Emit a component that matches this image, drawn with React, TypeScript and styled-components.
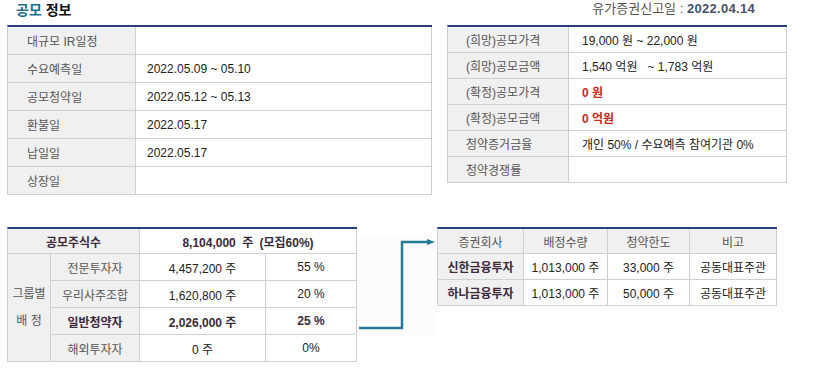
import styled, { createGlobalStyle } from "styled-components"

const GlobalStyle = createGlobalStyle`
    body {
        margin: 0;
        background: #fff;
        font-family: "Liberation Sans", "Noto Sans CJK KR", sans-serif;
        font-size: 12px;
        color: #333;
    }
`

const topLeft = [
    { label: "대규모 IR일정", value: "" },
    { label: "수요예측일", value: "2022.05.09 ~ 05.10" },
    { label: "공모청약일", value: "2022.05.12 ~ 05.13" },
    { label: "환불일", value: "2022.05.17" },
    { label: "납일일", value: "2022.05.17" },
    { label: "상장일", value: "" },
]

const topRight = [
    { label: "(희망)공모가격", value: "19,000 원 ~ 22,000 원" },
    { label: "(희망)공모금액", value: "1,540 억원 \u00a0 ~ 1,783 억원" },
    { label: "(확정)공모가격", value: "0 원", red: true },
    { label: "(확정)공모금액", value: "0 억원", red: true },
    { label: "청약증거금율", value: "개인 50% / 수요예측 참여기관 0%" },
    { label: "청약경쟁률", value: "" },
]

const groups = [
    { name: "전문투자자", qty: "4,457,200 주", pct: "55 %" },
    { name: "우리사주조합", qty: "1,620,800 주", pct: "20 %" },
    { name: "일반청약자", qty: "2,026,000 주", pct: "25 %", bold: true },
    { name: "해외투자자", qty: "0 주", pct: "0%" },
]

const brokers = [
    { name: "신한금융투자", qty: "1,013,000 주", limit: "33,000 주", note: "공동대표주관" },
    { name: "하나금융투자", qty: "1,013,000 주", limit: "50,000 주", note: "공동대표주관" },
]

export default function App() {
    return (
        <Page>
            <GlobalStyle />
            <TitleBar>
                <Title><em>공모</em> 정보</Title>
                <FilingDate>유가증권신고일 : <b>2022.04.14</b></FilingDate>
            </TitleBar>

            <TopRow>
                <InfoTable $width={425}>
                    <colgroup>
                        <col style={{ width: 128 }} />
                        <col />
                    </colgroup>
                    <tbody>
                        {topLeft.map((r) => (
                            <tr key={r.label}>
                                <Th $h={27} $pad={19}>{r.label}</Th>
                                <Td $h={27} $pad={11}>{r.value}</Td>
                            </tr>
                        ))}
                    </tbody>
                </InfoTable>

                <InfoTable $width={340}>
                    <colgroup>
                        <col style={{ width: 121 }} />
                        <col />
                    </colgroup>
                    <tbody>
                        {topRight.map((r) => (
                            <tr key={r.label}>
                                <Th $h={25} $pad={18}>{r.label}</Th>
                                <Td $h={25} $pad={13}>
                                    {r.red ? <Red>{r.value}</Red> : r.value}
                                </Td>
                            </tr>
                        ))}
                    </tbody>
                </InfoTable>
            </TopRow>

            <BottomRow>
                <InfoTable $width={350}>
                    <colgroup>
                        <col style={{ width: 43 }} />
                        <col style={{ width: 89 }} />
                        <col style={{ width: 126 }} />
                        <col />
                    </colgroup>
                    <tbody>
                        <tr>
                            <Th $h={24} $center $bold colSpan={2}>공모주식수</Th>
                            <Td $h={24} $center $bold $wide colSpan={2}>8,104,000 주 (모집60%)</Td>
                        </tr>
                        {groups.map((g, i) => (
                            <tr key={g.name}>
                                {i === 0 && (
                                    <Th $h={26} $center rowSpan={4}>
                                        <GroupLabel>그룹별<br />배 정</GroupLabel>
                                    </Th>
                                )}
                                <Th $h={26} $center $bold={g.bold}>{g.name}</Th>
                                <Td $h={26} $center $bold={g.bold}>{g.qty}</Td>
                                <Td $h={26} $center $bold={g.bold}>{g.pct}</Td>
                            </tr>
                        ))}
                    </tbody>
                </InfoTable>

                <ArrowBox>
                    <svg width="80" height="97" viewBox="0 0 80 97">
                        <path d="M2 90 H45 V4 H72" fill="none" stroke="#247c93" strokeWidth="2.5" />
                        <polygon points="70,1 78,4 70,7" fill="#247c93" />
                    </svg>
                </ArrowBox>

                <InfoTable $width={340}>
                    <colgroup>
                        <col style={{ width: 86 }} />
                        <col style={{ width: 84 }} />
                        <col style={{ width: 82 }} />
                        <col />
                    </colgroup>
                    <tbody>
                        <tr>
                            <Th $h={24} $center>증권회사</Th>
                            <Th $h={24} $center>배정수량</Th>
                            <Th $h={24} $center>청약한도</Th>
                            <Th $h={24} $center>비고</Th>
                        </tr>
                        {brokers.map((b) => (
                            <tr key={b.name}>
                                <Th $h={25} $center $bold>{b.name}</Th>
                                <Td $h={25} $center>{b.qty}</Td>
                                <Td $h={25} $center>{b.limit}</Td>
                                <Td $h={25} $center>{b.note}</Td>
                            </tr>
                        ))}
                    </tbody>
                </InfoTable>
            </BottomRow>
        </Page>
    )
}

const Page = styled.div`
    padding: 0 0 0 7px;
    width: 780px;
`

const TitleBar = styled.div`
    display: flex;
    justify-content: space-between;
    align-items: flex-end;
    height: 25px;
    width: 780px;
`

const Title = styled.h2`
    margin: 0 0 7px 9px;
    font-size: 14px;
    font-weight: bold;
    color: #111;
    line-height: 16px;

    em {
        font-style: normal;
        color: #1c6f8c;
    }
`

const FilingDate = styled.div`
    align-self: flex-start;
    margin: 1px 32px 0 0;
    font-size: 13px;
    line-height: 16px;
    color: #555;

    b {
        color: #4a5068;
        font-weight: bold;
        letter-spacing: 0.3px;
    }
`

const TopRow = styled.div`
    display: flex;
    gap: 15px;
    align-items: flex-start;
`

const BottomRow = styled.div`
    display: flex;
    align-items: flex-start;
    margin-top: 32px;
`

const InfoTable = styled.table<{ $width: number }>`
    width: ${(p) => p.$width}px;
    table-layout: fixed;
    border-collapse: separate;
    border-spacing: 0;
    border-top: 2px solid #283f7a;
    border-left: 1px solid #cfcfcf;
`

const cell = `
    border-right: 1px solid #cfcfcf;
    border-bottom: 1px solid #cfcfcf;
    font-size: 12px;
    white-space: nowrap;
    padding-top: 0;
    padding-bottom: 0;
`

const Th = styled.td<{ $h: number; $pad?: number; $center?: boolean; $bold?: boolean }>`
    ${cell}
    height: ${(p) => p.$h}px;
    padding-left: ${(p) => p.$pad ?? 0}px;
    padding-right: 0;
    text-align: ${(p) => (p.$center ? "center" : "left")};
    background: #f0f0f0;
    color: ${(p) => (p.$bold ? "#3a2a3a" : "#555")};
    font-weight: ${(p) => (p.$bold ? "bold" : "normal")};
`

const Td = styled.td<{ $h: number; $pad?: number; $center?: boolean; $bold?: boolean; $wide?: boolean }>`
    ${cell}
    height: ${(p) => p.$h}px;
    padding-left: ${(p) => p.$pad ?? 0}px;
    padding-right: 0;
    text-align: ${(p) => (p.$center ? "center" : "left")};
    background: #fff;
    color: ${(p) => (p.$bold ? "#3a2a3a" : "#222")};
    font-weight: ${(p) => (p.$bold ? "bold" : "normal")};
    word-spacing: ${(p) => (p.$wide ? "3px" : "normal")};
`

const Red = styled.span`
    color: #c8281c;
    font-weight: bold;
`

const GroupLabel = styled.span`
    display: inline-block;
    line-height: 27px;
    color: #555;
`

const ArrowBox = styled.div`
    width: 80px;
    height: 97px;
    margin-top: 11px;
    background: #fcfcfc;

    svg {
        display: block;
    }
`
